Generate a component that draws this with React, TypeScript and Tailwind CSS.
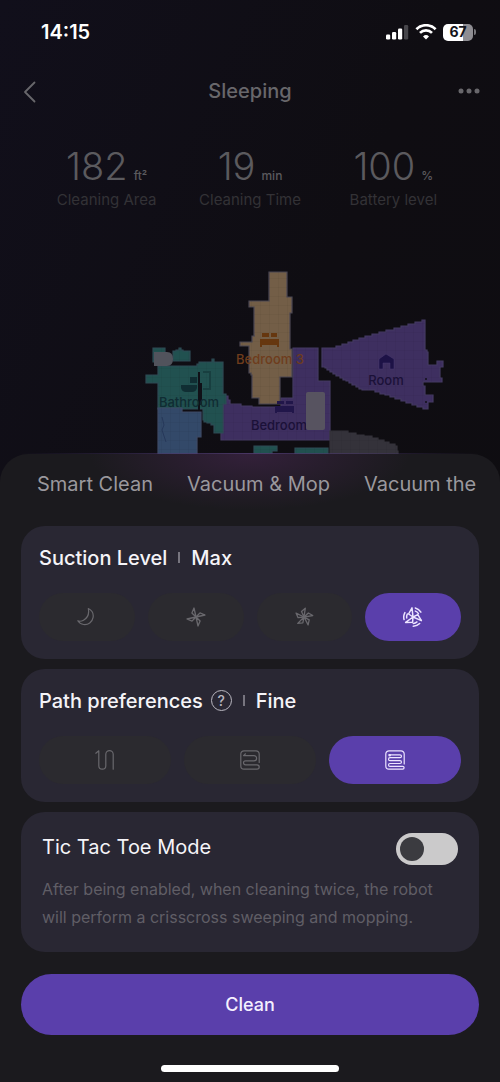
import { useState, type ReactNode } from "react";

type Point = [number, number];

/** Builds a path whose slanted edges are drawn as small steps, like a lidar grid map. */
function gridPath(points: Point[], step = 2): string {
  let d = `M${points[0][0]} ${points[0][1]}`;
  for (let i = 1; i <= points.length; i++) {
    const [x0, y0] = points[i - 1];
    const [x1, y1] = points[i % points.length];
    const dx = x1 - x0;
    const dy = y1 - y0;
    const count = Math.max(1, Math.round(Math.min(Math.abs(dx), Math.abs(dy)) / step));
    for (let s = 1; s <= count; s++) {
      d += `H${Math.round(x0 + (dx * s) / count)}V${Math.round(y0 + (dy * s) / count)}`;
    }
  }
  return d + "Z";
}

const rooms: { fill: string; edge: string; points: Point[] }[] = [
  {
    fill: "#3e2f60",
    edge: "#443a62",
    points: [[293, 348], [316, 348], [318, 353], [318, 381], [330, 381], [330, 440], [221, 440], [221, 431], [223, 431], [223, 396], [226, 396], [230, 404], [252, 407], [281, 407], [281, 398], [293, 398]],
  },
  {
    fill: "#735e47",
    edge: "#4b4753",
    points: [[269, 272], [287, 272], [287, 297], [292, 297], [292, 313], [290, 313], [290, 349], [292, 349], [292, 377], [280, 379], [280, 404], [259, 404], [259, 398], [252, 396], [252, 375], [249, 370], [249, 346], [240, 346], [240, 342], [252, 342], [252, 336], [255, 336], [254, 307], [249, 307], [249, 301], [269, 301]],
  },
  { fill: "#215150", edge: "#2e4a54", points: [[153, 348], [165, 348], [165, 362], [153, 362]] },
  { fill: "#215150", edge: "#2e4a54", points: [[173, 351], [179, 348], [183, 351], [190, 351], [190, 361], [173, 360]] },
  {
    fill: "#215150",
    edge: "#2e4a54",
    points: [[158, 366], [195, 366], [199, 362], [211, 362], [212, 359], [214, 362], [223, 362], [223, 394], [226, 396], [226, 404], [223, 404], [223, 433], [214, 433], [214, 425], [204, 420], [203, 409], [158, 409], [158, 383], [146, 383], [146, 375], [158, 375]],
  },
  {
    fill: "#334969",
    edge: "#3e4a66",
    points: [[158, 408], [180, 408], [182, 412], [201, 412], [201, 437], [197, 437], [197, 456], [158, 456]],
  },
  { fill: "#215150", edge: "#2e4a54", points: [[254, 446], [277, 446], [277, 451], [272, 451], [272, 456], [254, 456]] },
  { fill: "#215150", edge: "#2e4a54", points: [[295, 448], [328, 448], [328, 456], [295, 456]] },
  { fill: "#34323a", edge: "#34323a", points: [[330, 431], [348, 433], [372, 438], [395, 446], [398, 456], [330, 456]] },
  {
    fill: "#3e2f60",
    edge: "#443a62",
    points: [[322, 348], [336, 346], [365, 336], [422, 320], [425, 322], [425, 350], [428, 354], [428, 365], [437, 365], [437, 361], [443, 361], [443, 367], [440, 367], [440, 378], [442, 378], [442, 382], [423, 382], [423, 386], [425, 386], [425, 395], [433, 395], [433, 402], [428, 402], [428, 409], [395, 397], [375, 390], [362, 389], [330, 370], [322, 365]],
  },
];

function FloorMap() {
  return (
    <svg viewBox="0 214 500 240" className="block h-60 w-full" role="img" aria-label="Floor map" fontFamily='Inter, "Liberation Sans", sans-serif'>
      <defs>
        <pattern id="tiles" width="9" height="9" patternUnits="userSpaceOnUse">
          <path d="M9 0V9H0" fill="none" stroke="#000" strokeOpacity=".07" />
        </pattern>
        <linearGradient id="edge-glow">
          <stop offset="0" stopColor="#45376f" stopOpacity="0" />
          <stop offset=".5" stopColor="#4f3a6c" stopOpacity=".9" />
          <stop offset="1" stopColor="#45376f" stopOpacity="0" />
        </linearGradient>
      </defs>
      {rooms.map((room, i) => (
        <g key={i}>
          <path d={gridPath(room.points)} fill={room.fill} stroke={room.edge} strokeWidth="1.2" />
          <path d={gridPath(room.points)} fill="url(#tiles)" />
        </g>
      ))}
      <path d="M199 372v38M201 383v22" stroke="#101017" strokeWidth="2" />
      <path d="M203 372h7v17h-7" fill="none" stroke="#183f40" strokeWidth="2" />
      <path d="M162 417l2 8-2 5 4 12" fill="none" stroke="#26385a" />
      {/* bathtub */}
      <path d="M181 385h16v3q-1 4-5 4h-6q-4 0-5-4z M190 377h7v6h-7z" fill="#102e33" />
      {/* beds */}
      <path d="M262 333h7v4h-7z M271 333h6v4h-6z M260 339h19v8h-2v-2h-15v2h-2z" fill="#66370f" />
      <path d="M277 401h7v3h-7z M286 401h7v3h-7z M275 406h19v7h-2v-1h-15v1h-2z" fill="#21164a" />
      <path d="M154 352h13q6 0 6 7t-6 7h-13z" fill="#51535c" />
      {/* charging dock */}
      <path d="M379 359l7-5 8 5v10h-4v-6h-7v6h-4z" fill="#1d1246" stroke="#4a3a70" strokeWidth=".5" />
      <g fontSize="13" fontWeight="500" textAnchor="middle">
        <text x="270" y="364" fill="#6e3c1c">Bedroom 3</text>
        <text x="189" y="407" fill="#102c33">Bathroom</text>
        <text x="386" y="385" fill="#1b1138">Room</text>
        <text x="279" y="430" fill="#1b1138">Bedroom</text>
      </g>
      <rect x="306" y="392" width="19" height="38" rx="2" fill="#585560" fillOpacity=".95" />
      <circle cx="426" cy="379" r="1" fill="#121018" />
      <circle cx="426" cy="402" r="1" fill="#121018" />
      <rect x="20" y="453" width="460" height="1" fill="url(#edge-glow)" />
    </svg>
  );
}

function StatusIcons() {
  return (
    <div className="flex items-center gap-1.5">
      <svg viewBox="0 0 24 16" className="h-4 w-6" aria-label="Signal">
        <rect x="1" y="10.500" width="4.200" height="5" rx="1.200" fill="#fff" />
        <rect x="7" y="8" width="4.200" height="7.500" rx="1.200" fill="#fff" />
        <rect x="13" y="4.500" width="4.200" height="11" rx="1.200" fill="#fff" />
        <rect x="19" y="1" width="4.200" height="14.500" rx="1.200" fill="#47464b" />
      </svg>
      <svg viewBox="0 0 22 16" className="h-4 w-[22px]" aria-label="Wi-Fi" fill="none" stroke="#fff" strokeWidth="2.700">
        <path d="M1.400 5.200a13.600 13.600 0 0 1 19.200 0" />
        <path d="M5 8.900a8.500 8.500 0 0 1 12 0" />
        <path d="M11 15.600l-3-3.100a4.300 4.300 0 0 1 6 0z" fill="#fff" stroke="none" />
      </svg>
      <div className="flex items-center gap-px">
        <div className="flex h-[17px] w-[30px] items-center justify-center rounded-[5px] bg-linear-to-r from-white from-67% to-[#8e8d92] to-67% text-[14px] leading-none font-bold text-[#141318]">
          67
        </div>
        <div className="h-1.5 w-0.5 rounded-r-full bg-[#77767b]" />
      </div>
    </div>
  );
}

const stroke = { fill: "none", stroke: "currentColor", strokeLinejoin: "round", strokeLinecap: "round" } as const;

function MoonIcon() {
  return (
    <svg viewBox="0 0 20 20" className="size-5" {...stroke} strokeWidth="1.200">
      <path d="M11.300 1.500c3.500 1.700 5.400 5 4.800 8.800-.8 4.800-5 7.800-9.500 7.200-2.500-.3-4.500-1.600-5.800-3.700 1.500.6 3.600.6 5.700-.6 4-2.200 5.800-6.700 4.800-11.700z" />
    </svg>
  );
}

function FanIcon({ blades }: { blades: number }) {
  const path = blades === 4 ? "M10 10L5.900 6 8 1z" : "M10 10L7.500 4.600 11.300 1.200z";
  return (
    <svg viewBox="0 0 20 20" className="size-5" {...stroke} strokeWidth="1.300">
      {Array.from({ length: blades }, (_, i) => (
        <path key={i} d={path} transform={`rotate(${(360 / blades) * i} 10 10)`} />
      ))}
    </svg>
  );
}

function TurboIcon() {
  return (
    <svg viewBox="0 0 20 20" className="size-5" {...stroke} strokeWidth="1.500">
      {[0, 120, 240].map((angle) => (
        <g key={angle} transform={`rotate(${angle} 10 10)`}>
          <path d="M10 10L5.600 7 9 .9z" />
          <path d="M12.300 1a9.300 9.300 0 0 1 5.600 4.200M12.300 4.100a6.300 6.300 0 0 1 3.100 2.500" />
        </g>
      ))}
    </svg>
  );
}

function QuickPathIcon() {
  return (
    <svg viewBox="0 0 20 20" className="size-5" {...stroke} strokeWidth="1.200">
      <path d="M.8 3.200L3.800.8v14.900a3.500 3.500 0 0 0 7 0V4.300a3.700 3.700 0 0 1 7.400 0v14.900" />
    </svg>
  );
}

function StandardPathIcon() {
  return (
    <svg viewBox="0 0 20 20" className="size-5" {...stroke} strokeWidth="1.200">
      <path d="M19.200 12.500V4a3.200 3.200 0 0 0-3.200-3.200H4A3.200 3.200 0 0 0 .8 4v12A3.200 3.200 0 0 0 4 19.200h13a2.200 2.200 0 0 0 0-4.400H5.500a2 2 0 0 1 0-4H14a2.600 2.600 0 0 0 0-5.200H3.500M5.500 3.800L3.500 5.600" />
    </svg>
  );
}

function FinePathIcon() {
  return (
    <svg viewBox="0 0 20 20" className="size-5" {...stroke} strokeWidth="1.200">
      <path d="M19.200 14V4a3.200 3.200 0 0 0-3.200-3.200H4A3.200 3.200 0 0 0 .8 4v12A3.200 3.200 0 0 0 4 19.200h13.700a1.400 1.400 0 0 0 0-2.800H5a1.400 1.400 0 0 1 0-2.900h10a1.400 1.400 0 0 0 0-2.900H5a1.400 1.400 0 0 1 0-2.900h10a1.400 1.400 0 0 0 0-2.900H4" />
      <circle cx="4.700" cy="5.200" r=".7" />
    </svg>
  );
}

function Stat({ value, unit, label }: { value: string; unit: string; label: string }) {
  return (
    <div className="flex flex-1 flex-col items-center">
      <div className="flex items-baseline gap-1.5 text-[#5b5a5e]">
        <span className="text-[38px] leading-10 font-light">{value}</span>
        <span className="text-[12px] leading-none font-medium">{unit}</span>
      </div>
      <div className="mt-1 text-[15px] leading-5 whitespace-nowrap text-[#333236]">{label}</div>
    </div>
  );
}

interface Option {
  name: string;
  icon: ReactNode;
}

function OptionRow({ options, value, onChange }: { options: Option[]; value: string; onChange: (name: string) => void }) {
  return (
    <div className="mt-5 flex gap-[13px]">
      {options.map((option) => (
        <button
          key={option.name}
          type="button"
          aria-label={option.name}
          aria-pressed={option.name === value}
          onClick={() => onChange(option.name)}
          className={
            option.name === value
              ? "flex h-12 flex-1 items-center justify-center rounded-full bg-[#5a3fab] text-[#ece4ff]"
              : "flex h-12 flex-1 items-center justify-center rounded-full bg-[#2b2a2f] text-[#69686d]"
          }
        >
          {option.icon}
        </button>
      ))}
    </div>
  );
}

function Card({ children }: { children: ReactNode }) {
  return <section className="rounded-3xl bg-[#292733] px-[18px] pt-4 pb-[18px]">{children}</section>;
}

function Separator() {
  return <span className="h-[11px] w-0.5 bg-[#77757f]" />;
}

const suctionOptions: Option[] = [
  { name: "Quiet", icon: <MoonIcon /> },
  { name: "Standard", icon: <FanIcon blades={4} /> },
  { name: "Strong", icon: <FanIcon blades={5} /> },
  { name: "Max", icon: <TurboIcon /> },
];

const pathOptions: Option[] = [
  { name: "Quick", icon: <QuickPathIcon /> },
  { name: "Standard", icon: <StandardPathIcon /> },
  { name: "Fine", icon: <FinePathIcon /> },
];

export default function App() {
  const [suction, setSuction] = useState("Max");
  const [path, setPath] = useState("Fine");
  const [ticTacToe, setTicTacToe] = useState(false);

  return (
    <div className="flex min-h-screen flex-col bg-linear-to-br from-[#110f1b] via-[#0f0d12] via-45% to-[#0e0d10] font-[Inter,'Liberation_Sans',sans-serif]">
      <div className="flex h-16 items-center justify-between pr-6 pl-[41px]">
        <time className="text-[20px] font-semibold text-white">14:15</time>
        <StatusIcons />
      </div>

      <header className="flex h-[54px] items-center justify-between px-5 text-[#68676b]">
        <button type="button" aria-label="Back" className="flex w-8 justify-start">
          <svg viewBox="0 0 20 24" className="h-6 w-5" fill="none" stroke="currentColor" strokeWidth="1.800" strokeLinecap="round" strokeLinejoin="round">
            <path d="M14.500 3.500L5 13l9.500 9.500" />
          </svg>
        </button>
        <h1 className="text-[20px] leading-7 font-medium">Sleeping</h1>
        <button type="button" aria-label="More" className="flex w-8 justify-end">
          <svg viewBox="0 0 22 6" className="h-1.5 w-[22px]" fill="currentColor">
            <circle cx="3" cy="3" r="2.500" />
            <circle cx="11" cy="3" r="2.500" />
            <circle cx="19" cy="3" r="2.500" />
          </svg>
        </button>
      </header>

      <div className="flex h-24 items-start px-[35px] pt-7">
        <Stat value="182" unit="ft²" label="Cleaning Area" />
        <Stat value="19" unit="min" label="Cleaning Time" />
        <Stat value="100" unit="%" label="Battery level" />
      </div>

      <FloorMap />

      <main className="flex grow flex-col rounded-t-[28px] bg-[#1b1a1e] bg-[radial-gradient(160px_56px_at_50%_0,#33203a,transparent)] px-[21px] pb-2.5">
        <nav className="flex h-[72px] items-start gap-[34px] overflow-hidden pt-4 pl-4 text-[20px] leading-7 whitespace-nowrap text-[#9a989d]">
          <button type="button">Smart Clean</button>
          <button type="button">Vacuum &amp; Mop</button>
          <button type="button">Vacuum the</button>
        </nav>

        <div className="flex flex-col gap-2.5">
          <Card>
            <h2 className="flex h-[31px] items-center gap-[11px] text-[20px] font-medium text-[#f5f4f8]">
              Suction Level
              <Separator />
              {suction}
            </h2>
            <OptionRow options={suctionOptions} value={suction} onChange={setSuction} />
          </Card>

          <Card>
            <h2 className="flex h-[31px] items-center gap-[11px] text-[20px] font-medium text-[#f5f4f8]">
              <span className="flex items-center gap-2">
                Path preferences
                <button type="button" aria-label="About path preferences" className="flex size-[21px] items-center justify-center rounded-full border border-[#b9b7c0] text-[14px] leading-none text-[#b9b7c0]">
                  ?
                </button>
              </span>
              <Separator />
              {path}
            </h2>
            <OptionRow options={pathOptions} value={path} onChange={setPath} />
          </Card>

          <section className="rounded-3xl bg-[#292733] p-[21px]">
            <div className="flex items-start justify-between">
              <label htmlFor="tic-tac-toe" className="text-[20px] leading-7 text-[#f5f4f8]">
                Tic Tac Toe Mode
              </label>
              <input
                id="tic-tac-toe"
                type="checkbox"
                role="switch"
                checked={ticTacToe}
                onChange={(e) => setTicTacToe(e.target.checked)}
                className="flex h-8 w-[62px] cursor-pointer appearance-none items-center rounded-full bg-[#cbcacb] px-1 before:size-6 before:rounded-full before:bg-[#3b3b40] before:content-[''] checked:justify-end checked:bg-[#5a3fab]"
              />
            </div>
            <p className="mt-[10px] text-[16px] leading-7 text-[#605e66]">
              After being enabled, when cleaning twice, the robot will perform a crisscross sweeping and mopping.
            </p>
          </section>
        </div>

        <button type="button" className="mt-[22px] h-[61px] w-full rounded-full bg-[#5a3fab] text-[18px] font-medium text-[#f5f0ff]">
          Clean
        </button>
        <div className="mx-auto mt-auto h-[7px] w-[178px] rounded-full bg-white" />
      </main>
    </div>
  );
}
